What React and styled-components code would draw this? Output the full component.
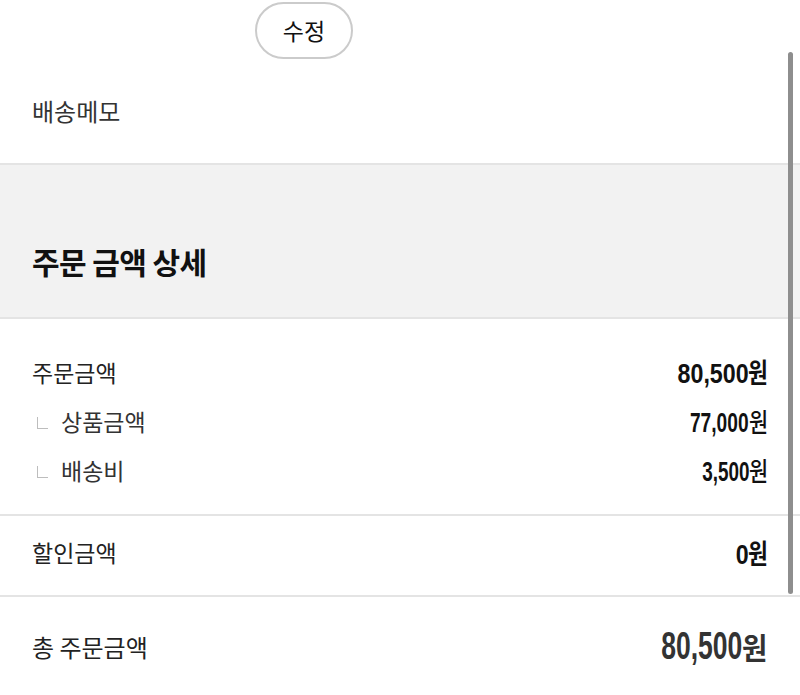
import React from "react";
import styled, { createGlobalStyle } from "styled-components";

const Global = createGlobalStyle`
  html, body { margin: 0; padding: 0; background: #fff; }
  body { font-family: "Noto Sans CJK KR", "Noto Sans", sans-serif; color: #222; }
`;

const Page = styled.div`
  position: relative;
  width: 800px;
  height: 695px;
  overflow: hidden;
  background: #fff;
`;

const ButtonRow = styled.div`
  display: flex;
  padding: 2px 0 0 255px;
`;

const PillButton = styled.button`
  width: 98px;
  height: 57px;
  border: 2px solid #cbcbcb;
  border-radius: 29px;
  background: #fff;
  font-family: "Noto Sans CJK KR", sans-serif;
  font-size: 23px;
  color: #111;
  padding: 0 0 2px;
  display: flex;
  align-items: center;
  justify-content: center;
`;

const MemoRow = styled.div`
  height: 104px;
  display: flex;
  align-items: center;
  padding: 0 32px 2px;
  box-sizing: border-box;
  font-size: 24px;
  color: #333;
`;

const Divider = styled.div`
  height: 2px;
  background: #e4e4e4;
`;

const SectionHead = styled.div`
  height: 152px;
  background: #f2f2f2;
  display: flex;
  align-items: flex-end;
  padding: 0 32px 38px;
  box-sizing: border-box;
`;

const Title = styled.h2`
  margin: 0;
  font-size: 30px;
  line-height: 36px;
  font-weight: 700;
  color: #111;
  letter-spacing: -0.6px;
`;

const Group = styled.div`
  display: flex;
  flex-direction: column;
  padding: 28px 0 20px;
`;

const Row = styled.div`
  display: flex;
  align-items: center;
  justify-content: space-between;
  height: ${(p) => p.$h || 49}px;
  padding: 0 32px ${(p) => p.$pb || 0}px;
  box-sizing: border-box;
`;

const Label = styled.span`
  display: flex;
  align-items: center;
  font-size: ${(p) => p.$size || 23}px;
  color: ${(p) => (p.$sub ? "#333" : "#222")};
`;

const Branch = styled.span`
  display: inline-block;
  width: 10px;
  height: 11px;
  border-left: 1.5px solid #bdbdbd;
  border-bottom: 1.5px solid #bdbdbd;
  margin: 5px 13px 0 5px;
`;

const Amount = styled.span`
  display: flex;
  align-items: baseline;
  color: ${(p) => p.$color || "#111"};
`;

const Digits = styled.span`
  display: inline-block;
  font-family: "Liberation Sans", Arial, sans-serif;
  font-weight: 700;
  font-size: ${(p) => p.$size}px;
  transform: scaleX(${(p) => p.$scale});
  transform-origin: right center;
`;

const Won = styled.span`
  display: inline-block;
  font-family: "Noto Sans CJK KR", sans-serif;
  font-weight: ${(p) => (p.$bold ? 700 : 500)};
  font-size: ${(p) => p.$size}px;
  transform: scaleX(${(p) => p.$scale});
  transform-origin: left center;
  margin-right: ${(p) => -Math.round((1 - p.$scale) * p.$size * 0.92)}px;
`;

const Scrollbar = styled.div`
  position: absolute;
  right: 7px;
  top: 52px;
  width: 5px;
  height: 542px;
  border-radius: 3px;
  background: #8e8e8e;
`;

function Price({ value, bold, size, scale, wonSize, wonScale, color }) {
  return (
    <Amount $color={color}>
      <Digits $size={size} $scale={scale}>
        {value}
      </Digits>
      <Won $bold={bold} $size={wonSize} $scale={wonScale}>
        원
      </Won>
    </Amount>
  );
}

export default function App() {
  return (
    <Page>
      <Global />
      <ButtonRow>
        <PillButton>수정</PillButton>
      </ButtonRow>
      <MemoRow>배송메모</MemoRow>
      <Divider />
      <SectionHead>
        <Title>주문 금액 상세</Title>
      </SectionHead>
      <Divider />
      <Group>
        <Row>
          <Label>주문금액</Label>
          <Price value="80,500" bold size={28} scale={0.83} wonSize={27} wonScale={0.8} />
        </Row>
        <Row>
          <Label $sub>
            <Branch />
            상품금액
          </Label>
          <Price value="77,000" size={27} scale={0.71} wonSize={26} wonScale={0.8} />
        </Row>
        <Row>
          <Label $sub>
            <Branch />
            배송비
          </Label>
          <Price value="3,500" size={27} scale={0.7} wonSize={26} wonScale={0.8} />
        </Row>
      </Group>
      <Divider />
      <Row $h={79} $pb={7}>
        <Label>할인금액</Label>
        <Price value="0" bold size={28} scale={0.83} wonSize={27} wonScale={0.8} />
      </Row>
      <Divider />
      <Row $h={98}>
        <Label $size={24}>총 주문금액</Label>
        <Price value="80,500" bold size={39} scale={0.68} wonSize={30} wonScale={0.92} color="#333" />
      </Row>
      <Scrollbar />
    </Page>
  );
}
